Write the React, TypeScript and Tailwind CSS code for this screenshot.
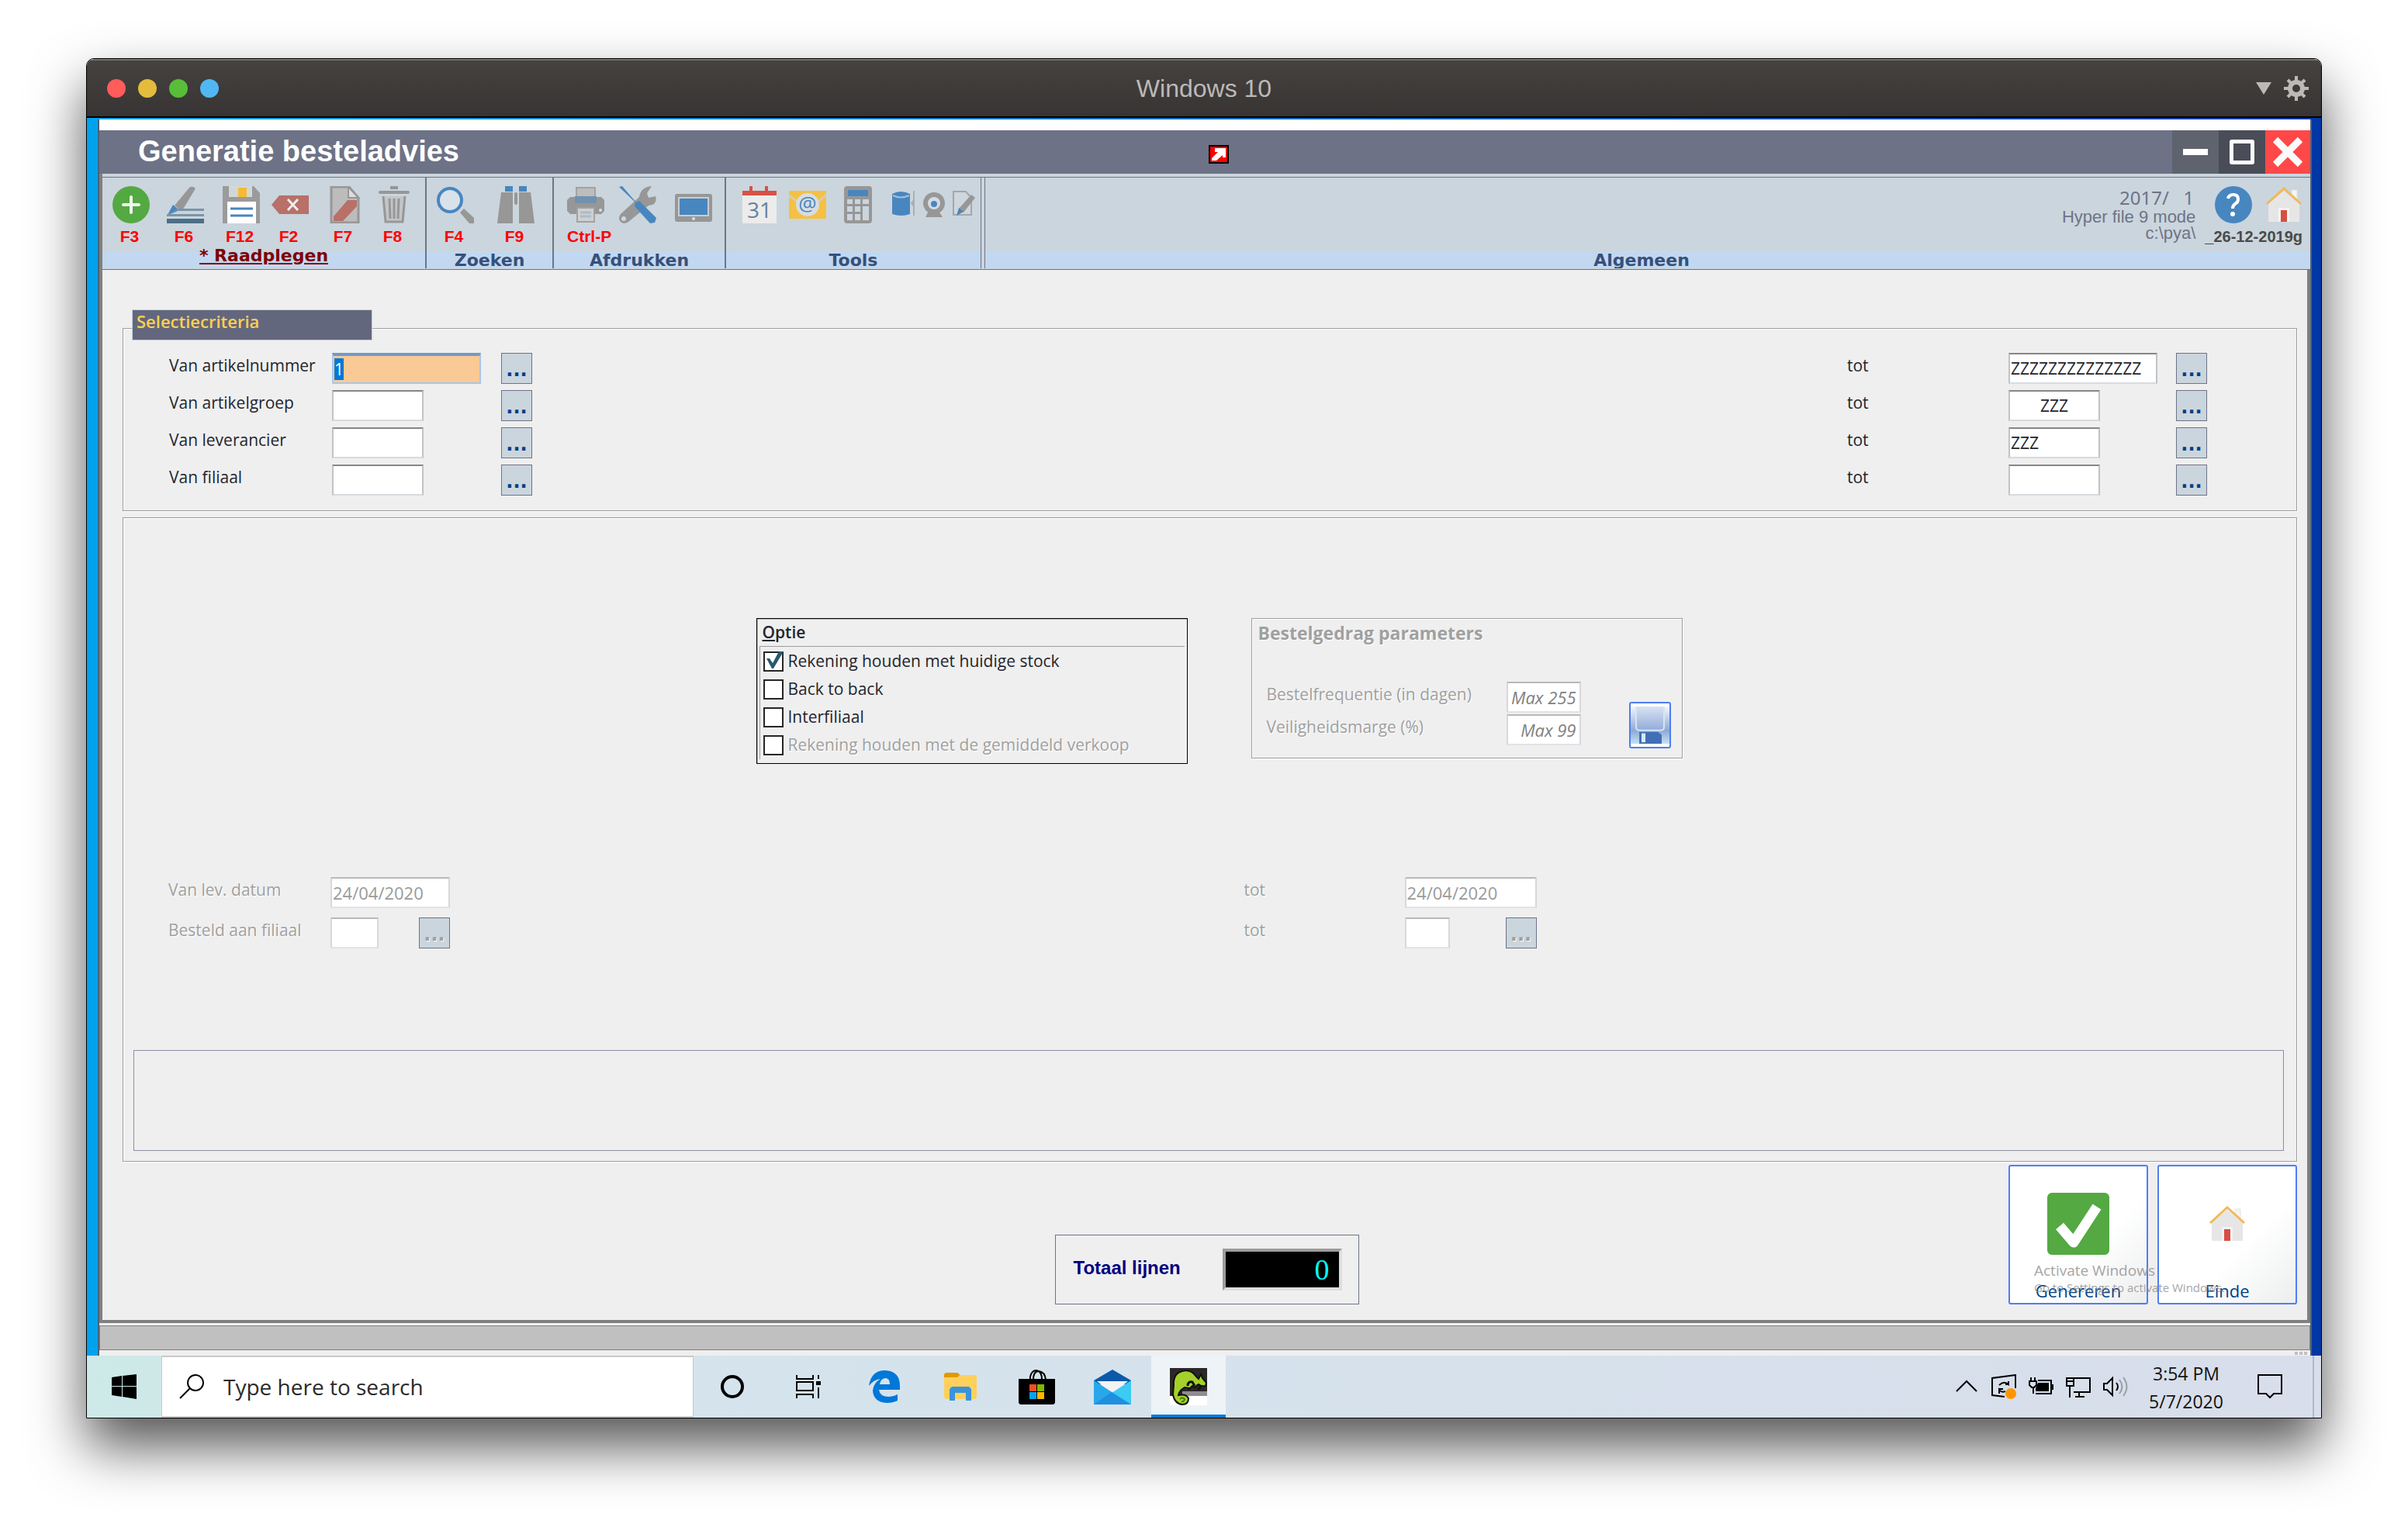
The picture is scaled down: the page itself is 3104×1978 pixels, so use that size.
import React from 'react';

const EMBOSSED = 'text-[#a0a0a0] [text-shadow:1px_1px_0_#fff]';

/* ---------- Toolbar icons ---------- */

const AddIcon = () => (
  <svg className="size-12" viewBox="0 0 48 48">
    <circle cx="24" cy="24" r="24" fill="#54a942" />
    <path d="M24 14v20M14 24h20" stroke="#fff" strokeWidth="4" strokeLinecap="round" opacity=".9" />
  </svg>
);

const EditIcon = () => (
  <svg className="size-12" viewBox="0 0 48 48">
    <path d="M29 2q4-3 8 1L22 28q-3 4-6 2l-6-5z" fill="#979797" />
    <path d="M8 24l8 7-6 3-9 3z" fill="#4886c0" />
    <path d="M0 37l8-4 6-4h34v3H14z" fill="#7a95a8" />
    <rect y="36" width="48" height="3" fill="#7a95a8" />
    <rect y="42" width="48" height="6" fill="#4d6f88" />
  </svg>
);

const SaveIcon = () => (
  <svg className="size-12" viewBox="0 0 48 48">
    <path d="M0 0h40l8 9v39H0z" fill="#9b9b9b" />
    <path d="M8 0h30v14H8z" fill="#d3d7da" />
    <rect x="20" y="2" width="11" height="12" fill="#f5bb33" />
    <rect x="6" y="20" width="37" height="28" fill="#fff" />
    <path d="M10 29h29M10 38h29" stroke="#4886c0" strokeWidth="3" />
  </svg>
);

const BackspaceIcon = () => (
  <svg className="size-12" viewBox="0 0 48 48">
    <path d="M0 24l10-12h38v24H10z" fill="#b87069" />
    <path d="M21 17l13 14M34 17L21 31" stroke="#eee" strokeWidth="3" />
  </svg>
);

const CancelDocIcon = () => (
  <svg className="size-12" viewBox="0 0 48 48">
    <path d="M7 1h23l12 14v32H7z" fill="#bcbcbc" stroke="#979797" strokeWidth="3" />
    <path d="M29 1v14h13z" fill="#ddd" stroke="#979797" strokeWidth="2" />
    <path d="M28 18h12v8L22 45H10v-6z" fill="#b87069" />
  </svg>
);

const TrashIcon = () => (
  <svg className="size-12" viewBox="0 0 48 48" fill="none" stroke="#979797">
    <path d="M19 2h10" strokeWidth="4" />
    <path d="M6 8h36" strokeWidth="4" strokeLinecap="round" />
    <path d="M10 13l3 33h22l3-33" fill="#c2c6c9" strokeWidth="3" />
    <path d="M18 16l1 26M24 16v26M30 16l-1 26" strokeWidth="3" />
  </svg>
);

const SearchIcon = () => (
  <svg className="size-12" viewBox="0 0 48 48">
    <path d="M30 34l5-5 13 12v7h-6z" fill="#979797" />
    <circle cx="17" cy="18" r="15" fill="#d9e2ea" stroke="#4886c0" strokeWidth="4" />
  </svg>
);

const BinocularsIcon = () => (
  <svg className="size-12" viewBox="0 0 48 48" fill="#979797">
    <path d="M10 0h10v7H10zM28 0h10v7H28z" fill="#4886c0" />
    <path d="M5 8h15v40H0zM28 8h15l5 40H28z" />
    <rect x="22" y="8" width="4" height="16" rx="2" />
  </svg>
);

const PrinterIcon = () => (
  <svg className="size-12" viewBox="0 0 48 48">
    <rect x="12" y="2" width="24" height="18" fill="#bdbdbd" stroke="#a2a2a2" strokeWidth="2" />
    <path d="M0 18l4-4h40l4 4v14l-4 4H4l-4-4z" fill="#979797" />
    <rect x="10" y="13" width="28" height="9" fill="#7092ae" />
    <rect x="13" y="28" width="22" height="18" fill="#d0d0d0" stroke="#a2a2a2" strokeWidth="2" />
    <path d="M17 34h14M17 39h14" stroke="#a9bccb" strokeWidth="3" />
    <circle cx="43" cy="31" r="2" fill="#ddd" />
  </svg>
);

const ToolsIcon = () => (
  <svg className="size-12" viewBox="0 0 48 48">
    <path d="M42 0l-6 9 2 6 9-2q3 11-9 12L12 46q-6 4-10 0t0-10l24-22Q28 1 42 0z" fill="#979797" />
    <circle cx="6" cy="42" r="3" fill="#d0d7dc" />
    <path d="M0 1l4-1 18 21 4-2 22 22-2 6-6 1-20-22 1-5z" fill="#4886c0" />
  </svg>
);

const TabletIcon = () => (
  <svg className="size-12" viewBox="0 0 48 48">
    <rect y="10" width="48" height="36" rx="3" fill="#979797" />
    <rect x="4" y="14" width="40" height="25" fill="#c9cdd0" />
    <rect x="6" y="16" width="36" height="21" fill="#4886c0" />
    <circle cx="24" cy="42" r="2" fill="#ddd" />
  </svg>
);

const CalendarIcon = () => (
  <svg className="size-12" viewBox="0 0 48 48">
    <path d="M11 0h4v6h16V0h4v6h11v6H2V6h9z" fill="#d85145" />
    <rect x="2" y="12" width="44" height="36" fill="#ececec" />
    <text x="24" y="41" textAnchor="middle" fontSize="28" fontFamily="Open Sans, sans-serif" fill="#67839b">31</text>
  </svg>
);

const MailAtIcon = () => (
  <svg className="size-12" viewBox="0 0 48 48">
    <rect y="6" width="48" height="36" fill="#f5c043" />
    <path d="M0 12l24 18 24-18" fill="none" stroke="#d3cfae" strokeWidth="3" />
    <circle cx="24" cy="24" r="15" fill="#d7dde0" />
    <text x="24" y="32" textAnchor="middle" fontSize="26" fontFamily="Open Sans, sans-serif" fill="#4886c0">@</text>
  </svg>
);

const CalculatorIcon = () => (
  <svg className="size-12" viewBox="0 0 48 48">
    <rect x="6" width="36" height="48" rx="4" fill="#979797" />
    <rect x="11" y="5" width="26" height="8" fill="#4886c0" />
    <path d="M10 17h7v6h-7zM20 17h7v6h-7zM30 17h8v6h-8zM10 26h7v7h-7zM20 26h7v7h-7zM30 26h8v18h-8zM10 36h7v8h-7zM20 36h7v8h-7z" fill="#ccd5dd" />
  </svg>
);

const DatabaseIcon = () => (
  <svg className="h-12 w-[30px]" viewBox="0 0 30 48">
    <path d="M0 10q11-6 23 0v26q-11 4-23 0z" fill="#4886c0" />
    <path d="M1 12q10 5 21 0" fill="none" stroke="#9fc0dd" strokeWidth="2" />
    <path d="M28 6v32M28 18l-3 4 3 4z" stroke="#aab0b5" strokeWidth="2" fill="#979797" />
  </svg>
);

const WebcamIcon = () => (
  <svg className="h-12 w-[30px]" viewBox="0 0 30 48">
    <path d="M8 32h13l5 8H4z" fill="#979797" />
    <circle cx="15" cy="22" r="11" fill="#d5dbe0" stroke="#979797" strokeWidth="6" />
    <circle cx="15" cy="23" r="4" fill="#4886c0" />
  </svg>
);

const NoteIcon = () => (
  <svg className="h-12 w-[30px]" viewBox="0 0 30 48">
    <path d="M1 7h16l7 8v22H1z" fill="#cfd7dd" stroke="#a2a7ab" strokeWidth="2" />
    <path d="M24 11l5 4-15 19-6-5z" fill="#979797" />
    <path d="M8 28l6 5-9 5z" fill="#4886c0" />
  </svg>
);

const HelpIcon = () => (
  <svg className="size-12" viewBox="0 0 48 48">
    <circle cx="24" cy="24" r="24" fill="#4886c0" />
    <path d="M17 16q1-5 7-5t6 6q0 4-4 6-3 2-3 6" fill="none" stroke="#fff" strokeWidth="4" />
    <circle cx="23" cy="36" r="3" fill="#fff" />
  </svg>
);

const HouseIcon = () => (
  <svg className="size-12" viewBox="0 0 48 48">
    <path d="M34 5h7v12l-7-6z" fill="#f4f4f4" stroke="#e2e2e2" />
    <path d="M4 22L24 6l20 16v24H4z" fill="#e6e6e6" />
    <path d="M2 23L24 3l22 20" fill="none" stroke="#f2b957" strokeWidth="3" />
    <rect x="17" y="28" width="14" height="18" fill="#f3f3f3" />
    <rect x="20" y="31" width="8" height="15" fill="#d64f43" />
  </svg>
);

/* ---------- Form parts ---------- */

type FieldProps = React.ComponentProps<'input'>;

const Field: React.FC<FieldProps> = ({ className = '', ...rest }) => (
  <input
    {...rest}
    className={`h-10 border-2 border-t-[#868686] border-x-[#c0c3c6] border-b-[#d7dbe0] px-px outline-none disabled:border-t-[#b9b9b9] disabled:border-x-[#d8d8dc] disabled:border-b-[#e2e3e8] ${className}`}
  />
);

const LookupButton = ({ disabled = false, label }: { disabled?: boolean; label: string }) => (
  <button
    type="button"
    aria-label={label}
    disabled={disabled}
    className="flex size-10 items-center justify-center border border-[#6d7489] bg-[#cbd5dd] pt-1 font-['DejaVu_Sans',sans-serif] text-2xl leading-6 font-bold text-[#003f86] disabled:text-[#a0a0a0] disabled:[text-shadow:1px_1px_0_#fff]"
  >
    ...
  </button>
);

const criteria = [
  { id: 'artikelnummer', label: 'Van artikelnummer', from: '1', to: 'ZZZZZZZZZZZZZZ', width: 'w-[192px]', align: 'text-left' },
  { id: 'artikelgroep', label: 'Van artikelgroep', from: '', to: 'ZZZ', width: 'w-[118px]', align: 'text-center' },
  { id: 'leverancier', label: 'Van leverancier', from: '', to: 'ZZZ', width: 'w-[118px]', align: 'text-left' },
  { id: 'filiaal', label: 'Van filiaal', from: '', to: '', width: 'w-[118px]', align: 'text-left' },
];

const SelectionCriteria = () => {
  const first = React.useRef<HTMLInputElement>(null);

  React.useEffect(() => {
    first.current?.focus();
    first.current?.select();
  }, []);

  return (
    <section className="flex flex-col">
      <h2 className="z-10 -mb-4 ml-3 h-10 w-[310px] border border-[#c5d1dd] bg-[#63677d] px-[5px] text-[22px] leading-7 font-semibold text-[#ffd053]">
        Selectiecriteria
      </h2>
      <div className="flex flex-col gap-2 border border-[#9c9c9c] pt-[31px] pr-[115px] pb-[19px] pl-[59px] shadow-[1px_1px_0_#fff,inset_1px_1px_0_#fff]">
        {criteria.map((row, i) => (
          <div key={row.id} className="flex h-10 items-start">
            <label htmlFor={`van-${row.id}`} className="w-[210px] leading-8">{row.label}</label>
            <div className="mr-[26px] w-[192px]">
              <Field
                ref={i === 0 ? first : undefined}
                id={`van-${row.id}`}
                defaultValue={row.from}
                className={`${row.width} ${i === 0 ? 'border-t-4! border-t-[#7399c6]! border-x-[#a9c6ea]! border-b-[#a9c6ea]! bg-[#f9ca96] caret-transparent selection:bg-[#0078d7] selection:text-white' : 'bg-white'}`}
              />
            </div>
            <LookupButton label={`Zoek ${row.id} van`} />
            <label htmlFor={`tot-${row.id}`} className="ml-auto w-[208px] leading-8">tot</label>
            <div className="mr-6 w-[192px]">
              <Field id={`tot-${row.id}`} defaultValue={row.to} className={`${row.width} ${row.align} bg-white`} />
            </div>
            <LookupButton label={`Zoek ${row.id} tot`} />
          </div>
        ))}
      </div>
    </section>
  );
};

const options = [
  { id: 'stock', label: 'Rekening houden met huidige stock', checked: true, disabled: false },
  { id: 'b2b', label: 'Back to back', checked: false, disabled: false },
  { id: 'interfiliaal', label: 'Interfiliaal', checked: false, disabled: false },
  { id: 'verkoop', label: 'Rekening houden met de gemiddeld verkoop', checked: false, disabled: true },
];

const OptionBox = () => (
  <div className="h-[188px] w-[556px] border border-black p-[3px] shadow-[inset_1px_1px_0_#bbb]">
    <h3 className="px-1 pb-1 text-[21px] leading-7 font-semibold">
      <span className="underline underline-offset-2">O</span>ptie
    </h3>
    <div className="border-t border-l border-[#9c9c9c] pt-px">
      {options.map((o) => (
        <div key={o.id} className="flex h-9 items-center gap-1.5 pl-1">
          <span className="relative flex size-[26px]">
            <input
              id={o.id}
              type="checkbox"
              defaultChecked={o.checked}
              disabled={o.disabled}
              className="peer size-[26px] appearance-none border-2 border-[#262626] bg-white"
            />
            <svg viewBox="0 0 26 26" className="pointer-events-none absolute inset-0 hidden peer-checked:block">
              <path d="M4 9h4l4 6L20 0h6L13 22h-2z" fill="#28596d" />
            </svg>
          </span>
          <label htmlFor={o.id} className={o.disabled ? `pb-0.5 leading-7 ${EMBOSSED}` : 'pb-0.5 leading-7'}>{o.label}</label>
        </div>
      ))}
    </div>
  </div>
);

const OrderParameters = () => (
  <div className="flex h-[181px] w-[556px] flex-col border border-[#9c9c9c] pr-[14px] pl-2 shadow-[1px_1px_0_#fff,inset_1px_1px_0_#fff]">
    <h3 className={`text-[23px] leading-9 font-bold ${EMBOSSED}`}>Bestelgedrag parameters</h3>
    <div className="flex pt-[45px] pl-[11px]">
      <div className="flex w-[309px] flex-col gap-0.5">
        <label htmlFor="frequentie" className={`h-10 leading-8 ${EMBOSSED}`}>Bestelfrequentie (in dagen)</label>
        <label htmlFor="marge" className={`h-10 leading-8 ${EMBOSSED}`}>Veiligheidsmarge (%)</label>
      </div>
      <div className="flex flex-col gap-0.5">
        <Field id="frequentie" disabled placeholder="Max 255" className="w-24 bg-white pr-1! text-right text-[22px] italic placeholder:text-[#808080]" />
        <Field id="marge" disabled placeholder="Max 99" className="w-24 bg-white pr-1! text-right text-[22px] italic placeholder:text-[#808080]" />
      </div>
      <button type="button" aria-label="Opslaan" className="mt-[26px] ml-auto h-[60px] w-[54px] rounded-[3px] border-2 border-[#4f7df0] bg-white py-1">
        <svg className="size-full" viewBox="0 0 50 50" preserveAspectRatio="none">
          <defs>
            <linearGradient id="disk" x2="0" y2="1">
              <stop stopColor="#f3f7fc" />
              <stop offset=".65" stopColor="#8ea8d8" />
              <stop offset="1" stopColor="#c4e3f0" />
            </linearGradient>
          </defs>
          <rect width="50" height="50" fill="url(#disk)" />
          <path d="M7 0v28q0 4 5 4h26q5 0 5-4V0" fill="#9db2de" fillOpacity=".3" stroke="#d3e6f5" strokeWidth="2" />
          <path d="M11 34h24l5 4v12H11z" fill="#416fb5" />
          <path d="M14 36h5v12h-5z" fill="#d7ebf7" />
        </svg>
      </button>
    </div>
  </div>
);

type DateRowProps = {
  id: string;
  label: string;
  long: string;
  labelWidth: string;
  dateWidth: string;
  codeWidth: string;
};

const DateRow = ({ id, label, long, labelWidth, dateWidth, codeWidth }: DateRowProps) => (
  <div className="flex flex-col gap-3">
    <div className="flex h-10 items-start">
      <label htmlFor={`datum-${id}`} className={`${labelWidth} leading-8 ${EMBOSSED}`}>{label}</label>
      <Field id={`datum-${id}`} disabled defaultValue="24/04/2020" className={`${dateWidth} bg-white text-[22px] text-[#9a9a9a]`} />
    </div>
    <div className="flex h-10 items-start">
      <label htmlFor={`code-${id}`} className={`${labelWidth} leading-8 ${EMBOSSED}`}>{long}</label>
      <div className={`${dateWidth} flex justify-between`}>
        <Field id={`code-${id}`} disabled className={`${codeWidth} bg-white`} />
        <LookupButton disabled label={`Zoek ${long}`} />
      </div>
    </div>
  </div>
);

/* ---------- Ribbon ---------- */

const ToolButton = ({ icon, hotkey, label }: { icon: React.ReactNode; hotkey?: string; label: string }) => (
  <button type="button" aria-label={label} className="flex w-12 flex-col items-start">
    {icon}
    {hotkey && (
      <span className="mt-[5px] min-w-11 text-center font-['Liberation_Sans',sans-serif] text-[21px] leading-6 font-bold whitespace-nowrap text-[#ff0000]">{hotkey}</span>
    )}
  </button>
);

const RibbonTitle = ({ children }: { children: React.ReactNode }) => (
  <div className="h-[22px] overflow-hidden bg-[#c2d8f0] text-center font-['DejaVu_Sans',sans-serif] text-[22px] leading-6 font-bold text-[#36507a]">
    {children}
  </div>
);

const Ribbon = () => (
  <div className="border-b border-[#6d7489] bg-[#cbd5dd] pt-1 pb-px">
    <div className="flex border-t border-[#6d7489]">
      <div className="w-[418px] border-r-2 border-[#6d7489]">
        <div className="grid h-[95px] grid-cols-[70px_72px_63px_70px_64px_48px] pt-[11px] pl-[13px]">
          <ToolButton icon={<AddIcon />} hotkey="F3" label="Nieuw" />
          <ToolButton icon={<EditIcon />} hotkey="F6" label="Wijzigen" />
          <ToolButton icon={<SaveIcon />} hotkey="F12" label="Opslaan" />
          <ToolButton icon={<BackspaceIcon />} hotkey="F2" label="Wissen" />
          <ToolButton icon={<CancelDocIcon />} hotkey="F7" label="Annuleren" />
          <ToolButton icon={<TrashIcon />} hotkey="F8" label="Verwijderen" />
        </div>
        <div className="h-[22px] bg-[#c2d8f0] text-center font-['DejaVu_Sans',sans-serif] text-[22px] leading-3 font-bold text-[#800000] underline underline-offset-2">
          * Raadplegen
        </div>
      </div>
      <div className="w-[164px] border-r-2 border-[#6d7489]">
        <div className="grid h-[95px] grid-cols-[78px_48px] pt-[11px] pl-[13px]">
          <ToolButton icon={<SearchIcon />} hotkey="F4" label="Zoeken" />
          <ToolButton icon={<BinocularsIcon />} hotkey="F9" label="Verder zoeken" />
        </div>
        <RibbonTitle>Zoeken</RibbonTitle>
      </div>
      <div className="w-[222px] border-r-2 border-[#6d7489]">
        <div className="grid h-[95px] grid-cols-[67px_72px_48px] pt-[11px] pl-[17px]">
          <ToolButton icon={<PrinterIcon />} hotkey="Ctrl-P" label="Afdrukken" />
          <ToolButton icon={<ToolsIcon />} label="Instellingen" />
          <ToolButton icon={<TabletIcon />} label="Scherm" />
        </div>
        <RibbonTitle>Afdrukken</RibbonTitle>
      </div>
      <div className="mr-1 w-[329px] border-r border-[#6d7489]">
        <div className="grid h-[95px] grid-cols-[62px_65px_68px_39px_39px_30px] pt-[11px] pl-[19px]">
          <ToolButton icon={<CalendarIcon />} label="Kalender" />
          <ToolButton icon={<MailAtIcon />} label="E-mail" />
          <ToolButton icon={<CalculatorIcon />} label="Rekenmachine" />
          <ToolButton icon={<DatabaseIcon />} label="Database" />
          <ToolButton icon={<WebcamIcon />} label="Webcam" />
          <ToolButton icon={<NoteIcon />} label="Notitie" />
        </div>
        <RibbonTitle>Tools</RibbonTitle>
      </div>
      <div className="flex-1 border-l border-[#6d7489]">
        <div className="flex h-[95px] justify-end gap-3 pr-[10px]">
          <div className="pt-3 text-right font-['Liberation_Sans',sans-serif] text-[22px] leading-[21px] text-[#6d7489]">
            <p className="pr-0.5 font-['Noto_Sans',sans-serif] text-2xl leading-7 whitespace-pre">2017/   1</p>
            <p>Hyper file 9 mode</p>
            <p>c:\pya\</p>
          </div>
          <div className="flex flex-col items-end pt-[11px]">
            <div className="flex gap-[17px]">
              <ToolButton icon={<HelpIcon />} label="Help" />
              <ToolButton icon={<HouseIcon />} label="Start" />
            </div>
            <span className="mt-[5px] font-['Liberation_Sans',sans-serif] text-xl leading-6 font-bold text-[#4a4a4a]">_26-12-2019g</span>
          </div>
        </div>
        <div className="bg-[#c2d8f0] pr-4">
          <RibbonTitle>Algemeen</RibbonTitle>
        </div>
      </div>
    </div>
  </div>
);

const AppTitleBar = () => (
  <header className="flex h-14 items-stretch bg-[#6d7286] pl-9">
    <div className="flex-1">
      <h1 className="pl-[14px] font-['Liberation_Sans',sans-serif] text-[38px] leading-[54px] font-bold text-white">Generatie besteladvies</h1>
    </div>
    <svg className="mt-[19px] h-6 w-[26px]" viewBox="0 0 26 24">
      <rect width="26" height="24" fill="#000" />
      <rect x="2" y="2" width="22" height="20" fill="#f00" />
      <path d="M8 4h14v12h-4v-3l-8 7H4v-3l8-8H8z" fill="#fff" />
    </svg>
    <div className="flex flex-1 justify-end">
      <button type="button" aria-label="Minimaliseren" className="flex w-[60px] items-center justify-center bg-[#5f636e]">
        <span className="h-2 w-8 bg-white" />
      </button>
      <button type="button" aria-label="Maximaliseren" className="flex w-[60px] items-center justify-center bg-[#4a4d57]">
        <span className="size-8 rounded-[3px] border-[5px] border-white" />
      </button>
      <button type="button" aria-label="Sluiten" className="flex w-[58px] items-center justify-center bg-[#ff4848]">
        <svg className="size-10" viewBox="0 0 40 40">
          <path d="M4 4l32 32M36 4L4 36" stroke="#fafafa" strokeWidth="9" />
        </svg>
      </button>
    </div>
  </header>
);

const actionButton =
  'flex size-[180px] flex-col items-center rounded-[3px] border-2 border-[#4f7df5] bg-linear-to-br from-white from-60% to-[#eceeee] text-[22px] text-[#003f86]';

const Footer = () => (
  <div className="mt-1 grid grid-cols-[1fr_auto_1fr] items-end">
    <span />
    <div className="mr-2 flex h-[90px] w-[392px] items-center justify-between border border-[#6d7489] pr-[21px] pl-[23px]">
      <label htmlFor="totaal" className="pb-1 font-['Liberation_Sans',sans-serif] text-2xl font-bold text-[#000080]">Totaal lijnen</label>
      <input
        id="totaal"
        readOnly
        value="0"
        className="h-[54px] w-[154px] border-4 border-t-[#9c9c9c] border-r-[#dedede] border-b-[#dedede] border-l-[#9c9c9c] bg-black pr-3 text-right font-['Liberation_Serif',serif] text-[38px] text-[#00ffff] outline-none"
      />
    </div>
    <div className="relative ml-auto flex gap-3">
      <button type="button" className={actionButton}>
        <svg className="mt-[34px] mb-8 size-20" viewBox="0 0 80 80">
          <rect width="80" height="80" rx="6" fill="#54a942" />
          <path d="M16 43l18 21 30-46" fill="none" stroke="#fff" strokeWidth="13" strokeLinejoin="round" />
        </svg>
        <span className="leading-7">Genereren</span>
      </button>
      <button type="button" className={actionButton}>
        <span className="mt-[50px] mb-12"><HouseIcon /></span>
        <span className="leading-7">Einde</span>
      </button>
      <div className="pointer-events-none absolute top-[124px] left-[33px] text-[#8c8c8c]/80">
        <p className="text-[19px] leading-6">Activate Windows</p>
        <p className="text-[15px] leading-5 whitespace-nowrap">Go to Settings to activate Windows.</p>
      </div>
    </div>
  </div>
);

/* ---------- Taskbar ---------- */

const taskApps = [
  {
    name: 'Cortana',
    icon: <svg className="size-8" viewBox="0 0 32 32"><circle cx="16" cy="16" r="13" fill="none" stroke="#000" strokeWidth="4" /></svg>,
  },
  {
    name: 'Task View',
    icon: (
      <svg className="size-8" viewBox="0 0 32 32" fill="none" stroke="#000" strokeWidth="2">
        <path d="M1 1v5h21V1M1 31v-5h21v5M1 10h21v11H1zM29 1v5M29 17v14" />
        <path d="M26 9h6v5h-6z" fill="#000" stroke="none" />
      </svg>
    ),
  },
  {
    name: 'Edge',
    icon: (
      <svg className="h-[42px] w-10" viewBox="0 0 40 42">
        <path d="M0 20Q3 0 21 0q19 1 19 20v5H13q1 9 13 9 6 0 11-3v8q-6 3-14 3Q6 41 5 26q1-10 10-15-9 1-15 9zm14-2h13q0-8-6-8-6 1-7 8z" fill="#0078d7" fillRule="evenodd" />
      </svg>
    ),
  },
  {
    name: 'File Explorer',
    icon: (
      <svg className="h-9 w-[42px]" viewBox="0 0 42 36">
        <path d="M0 2l2-2h15l4 3v4H0z" fill="#dd9a06" />
        <path d="M0 6h17l3-3h20l2 2v27l-2 2H2l-2-2z" fill="#ffd05c" />
        <path d="M7 36V21l3-3h22l3 3v15h-7V26H14v10z" fill="#3a93db" />
      </svg>
    ),
  },
  {
    name: 'Store',
    icon: (
      <svg className="h-[45px] w-[47px]" viewBox="0 0 47 45">
        <path d="M15 13V9q2-8 8-8 7 1 7 12M19 13q0-11 7-11 8 1 9 11" fill="none" stroke="#000" strokeWidth="2" />
        <path d="M0 12h47v31l-2 2H2l-2-2z" fill="#000" />
        <path d="M14 19h9v9h-9z" fill="#f25022" />
        <path d="M24 19h9v9h-9z" fill="#7fba00" />
        <path d="M14 29h9v9h-9z" fill="#00a4ef" />
        <path d="M24 29h9v9h-9z" fill="#ffb900" />
      </svg>
    ),
  },
  {
    name: 'Mail',
    icon: (
      <svg className="h-[45px] w-12" viewBox="0 0 48 45">
        <path d="M0 14L24 0l24 14v5H0z" fill="#0a5aa8" />
        <path d="M4 15h40L24 31z" fill="#f3f3f3" />
        <path d="M0 14v31h48z" fill="#28a8ea" />
        <path d="M48 14v31L23 30z" fill="#3ccbf4" />
        <path d="M23 29l25 16H0z" fill="#1e90e0" />
      </svg>
    ),
  },
  {
    name: 'Generatie besteladvies',
    active: true,
    icon: (
      <svg className="size-12" viewBox="0 0 48 48">
        <rect width="48" height="48" fill="#fff" />
        <rect width="48" height="36" fill="#2b2829" />
        <rect x="16" y="30" width="32" height="6" fill="#8f8d8f" />
        <path
          d="M5 22Q4 7 16 4q11-3 18 7l3 3 3-6 2 5 5 6-1 4q-6 1-9-2-3 1-4 4l-4-2-3 3-7-1q-7 4-8 10 10-2 13 4 0 8-8 8-10-1-12-13z"
          fill="#a5d02a"
          stroke="#111"
          strokeWidth="2"
        />
        <path d="M13 40q3-3 6 0-1 4-4 3" fill="none" stroke="#3c7d14" strokeWidth="2" />
        <path d="M23 23q0-6 6-5l3 5M36 28l4-4M25 28v-3" fill="none" stroke="#111" strokeWidth="3" />
      </svg>
    ),
  },
];

const trayIcons = [
  {
    name: 'Show hidden icons',
    icon: <path d="M3 22l13-13 13 13" />,
  },
  {
    name: 'Windows Update',
    icon: (
      <>
        <path d="M17 29L1 27V5l30-4v17" />
        <path d="M10 14q6-6 12-1v-4M22 13h-4M18 22q-5 2-8-2v5M10 19h5" />
        <circle cx="25" cy="25" r="7" fill="#ff9500" stroke="none" />
      </>
    ),
  },
  {
    name: 'Battery',
    icon: (
      <>
        <path d="M3 4v5M8 4v5M1 9h9v5l-3 3H4l-3-3zM6 17v8" />
        <path d="M12 8h17v17H9" />
        <path d="M12 11h14v11H9v-4z" fill="#000" stroke="none" />
        <path d="M31 13v7" />
      </>
    ),
  },
  {
    name: 'Network',
    icon: (
      <>
        <path d="M10 5h21v18H10M17 23v6M12 29h12" />
        <path d="M1 5h9v10H1zM5 15v15M1 9h9" />
      </>
    ),
  },
  {
    name: 'Volume',
    icon: (
      <>
        <path d="M1 12h4l7-7v22l-7-7H1z" />
        <path d="M17 11q4 5 0 10" />
        <path d="M21 7q7 9 0 18M26 4q9 12 0 24" stroke="#9a9ea8" />
      </>
    ),
  },
];

const Taskbar = () => (
  <footer className="flex h-20 items-stretch bg-linear-to-r from-[#cde9e8] via-[#d4e4ed] via-20% to-[#d8deeb]">
    <button type="button" aria-label="Start" className="flex w-24 items-center justify-center">
      <svg className="size-8" viewBox="0 0 32 32">
        <path d="M0 4l13-2v13H0zM14 2l18-2v15H14zM0 16h13v13L0 27zM14 16h18v16l-18-3z" />
      </svg>
    </button>
    <label className="flex w-[686px] items-center gap-[25px] border-2 border-x border-[#cacaca] bg-white pl-[22px]">
      <svg className="size-8" viewBox="0 0 32 32" fill="none" stroke="#000" strokeWidth="2">
        <circle cx="21" cy="11" r="10" />
        <path d="M14 18L1 31" />
      </svg>
      <input type="text" aria-label="Search" placeholder="Type here to search" className="flex-1 text-[28px] outline-none placeholder:text-[#2b2b2b]" />
    </label>
    <nav className="ml-0.5 flex gap-0.5">
      {taskApps.map((app) => (
        <button
          key={app.name}
          type="button"
          aria-label={app.name}
          className={`flex w-24 items-center justify-center ${app.active ? 'border-t-4 border-b-4 border-t-[#eef3f8] border-b-[#0078d7] bg-[#eef3f8]' : ''}`}
        >
          {app.icon}
        </button>
      ))}
    </nav>
    <div className="ml-auto flex">
      {trayIcons.map((t) => (
        <button key={t.name} type="button" aria-label={t.name} className="flex w-12 items-center justify-center">
          <svg className="size-8" viewBox="0 0 32 32" fill="none" stroke="#000" strokeWidth="2">{t.icon}</svg>
        </button>
      ))}
      <div className="flex w-[134px] flex-col items-center pt-[5px] text-[23px] leading-9 text-[#111]">
        <span>3:54 PM</span>
        <span>5/7/2020</span>
      </div>
      <button type="button" aria-label="Notifications" className="flex w-[82px] items-center justify-center">
        <svg className="size-8" viewBox="0 0 32 32" fill="none" stroke="#000" strokeWidth="2">
          <path d="M1 1h30v24H21l-5 5-5-5H1z" />
        </svg>
      </button>
      <span className="mr-[9px] ml-3.5 w-0.5 bg-[#b3b8c6]" />
    </div>
  </footer>
);

export default function App() {
  return (
    <main className="bg-white pt-[75px] pr-[111px] pb-[147px] pl-[111px] font-['Open_Sans',sans-serif] text-[21px] text-[#23252d]">
      <div className="overflow-hidden rounded-t-[10px] border border-black shadow-[0_36px_70px_rgba(0,0,0,0.67)]">
        {/* Host window title */}
        <div className="flex h-[76px] items-center border-t-2 border-b-2 border-t-[#75736f] border-b-black bg-linear-to-b from-[#454240] to-[#373433] px-4">
          <div className="flex-1">
            <div className="flex gap-4 pl-[10px]">
              <span className="size-6 rounded-full bg-[#ff5c5a]" />
              <span className="size-6 rounded-full bg-[#e4bc3d]" />
              <span className="size-6 rounded-full bg-[#58be3a]" />
              <span className="size-6 rounded-full bg-[#51b7f3]" />
            </div>
          </div>
          <span className="font-['Liberation_Sans',sans-serif] text-[32px] text-[#bdb9b7]">Windows 10</span>
          <div className="flex flex-1 items-center justify-end gap-4">
            <svg className="h-4 w-5" viewBox="0 0 20 16"><path d="M0 0h20L10 16z" fill="#bdb9b7" /></svg>
            <svg className="size-8" viewBox="0 0 32 32" fill="none" stroke="#bdb9b7">
              <circle cx="16" cy="16" r="8" strokeWidth="6" />
              <path d="M16 0v6M16 26v6M0 16h6M26 16h6M5 5l4 4M23 23l4 4M27 5l-4 4M9 23l-4 4" strokeWidth="4" />
            </svg>
          </div>
        </div>

        {/* Guest desktop */}
        <div className="bg-linear-to-r from-[#00a2ee] to-[#0037a4] pt-0.5 pr-3 pl-[14px]">
          <div className="border-x-2 border-[#4d6273] bg-[#efefef]">
            <div className="h-3.5 bg-white" />
            <AppTitleBar />
            <div className="border-l-4 border-[#808080]">
              <Ribbon />
              <div className="border-r-4 border-b-4 border-[#808080] pt-[51px] pr-[13px] pb-5 pl-[26px]">
                <SelectionCriteria />
                <section className="mt-2 border border-[#9c9c9c] pt-[129px] pb-[13px] shadow-[1px_1px_0_#fff,inset_1px_1px_0_#fff]">
                  <div className="flex justify-center gap-[82px] pl-6">
                    <OptionBox />
                    <OrderParameters />
                  </div>
                  <div className="mt-[146px] grid grid-cols-2">
                    <div className="pl-[58px]">
                      <DateRow id="van" label="Van lev. datum" long="Besteld aan filiaal" labelWidth="w-[209px]" dateWidth="w-[154px]" codeWidth="w-[62px]" />
                    </div>
                    <div className="pl-[44px]">
                      <DateRow id="tot" label="tot" long="tot" labelWidth="w-[207px]" dateWidth="w-[170px]" codeWidth="w-[58px]" />
                    </div>
                  </div>
                  <div className="mt-[131px] mr-4 ml-[13px] h-[130px] border border-[#8b8fa3]" />
                </section>
                <Footer />
              </div>
            </div>
            {/* Status bar */}
            <div className="pt-[3px]">
              <div className="h-8 border border-[#808080] bg-[#c0c0c0]" />
              <div className="flex h-[7px] items-center justify-end gap-0.5 pr-1">
                <span className="size-1 bg-[#c0c0c0]" />
                <span className="size-1 bg-[#c0c0c0]" />
                <span className="size-1 bg-[#c0c0c0]" />
              </div>
            </div>
          </div>
        </div>
        <Taskbar />
      </div>
    </main>
  );
}
